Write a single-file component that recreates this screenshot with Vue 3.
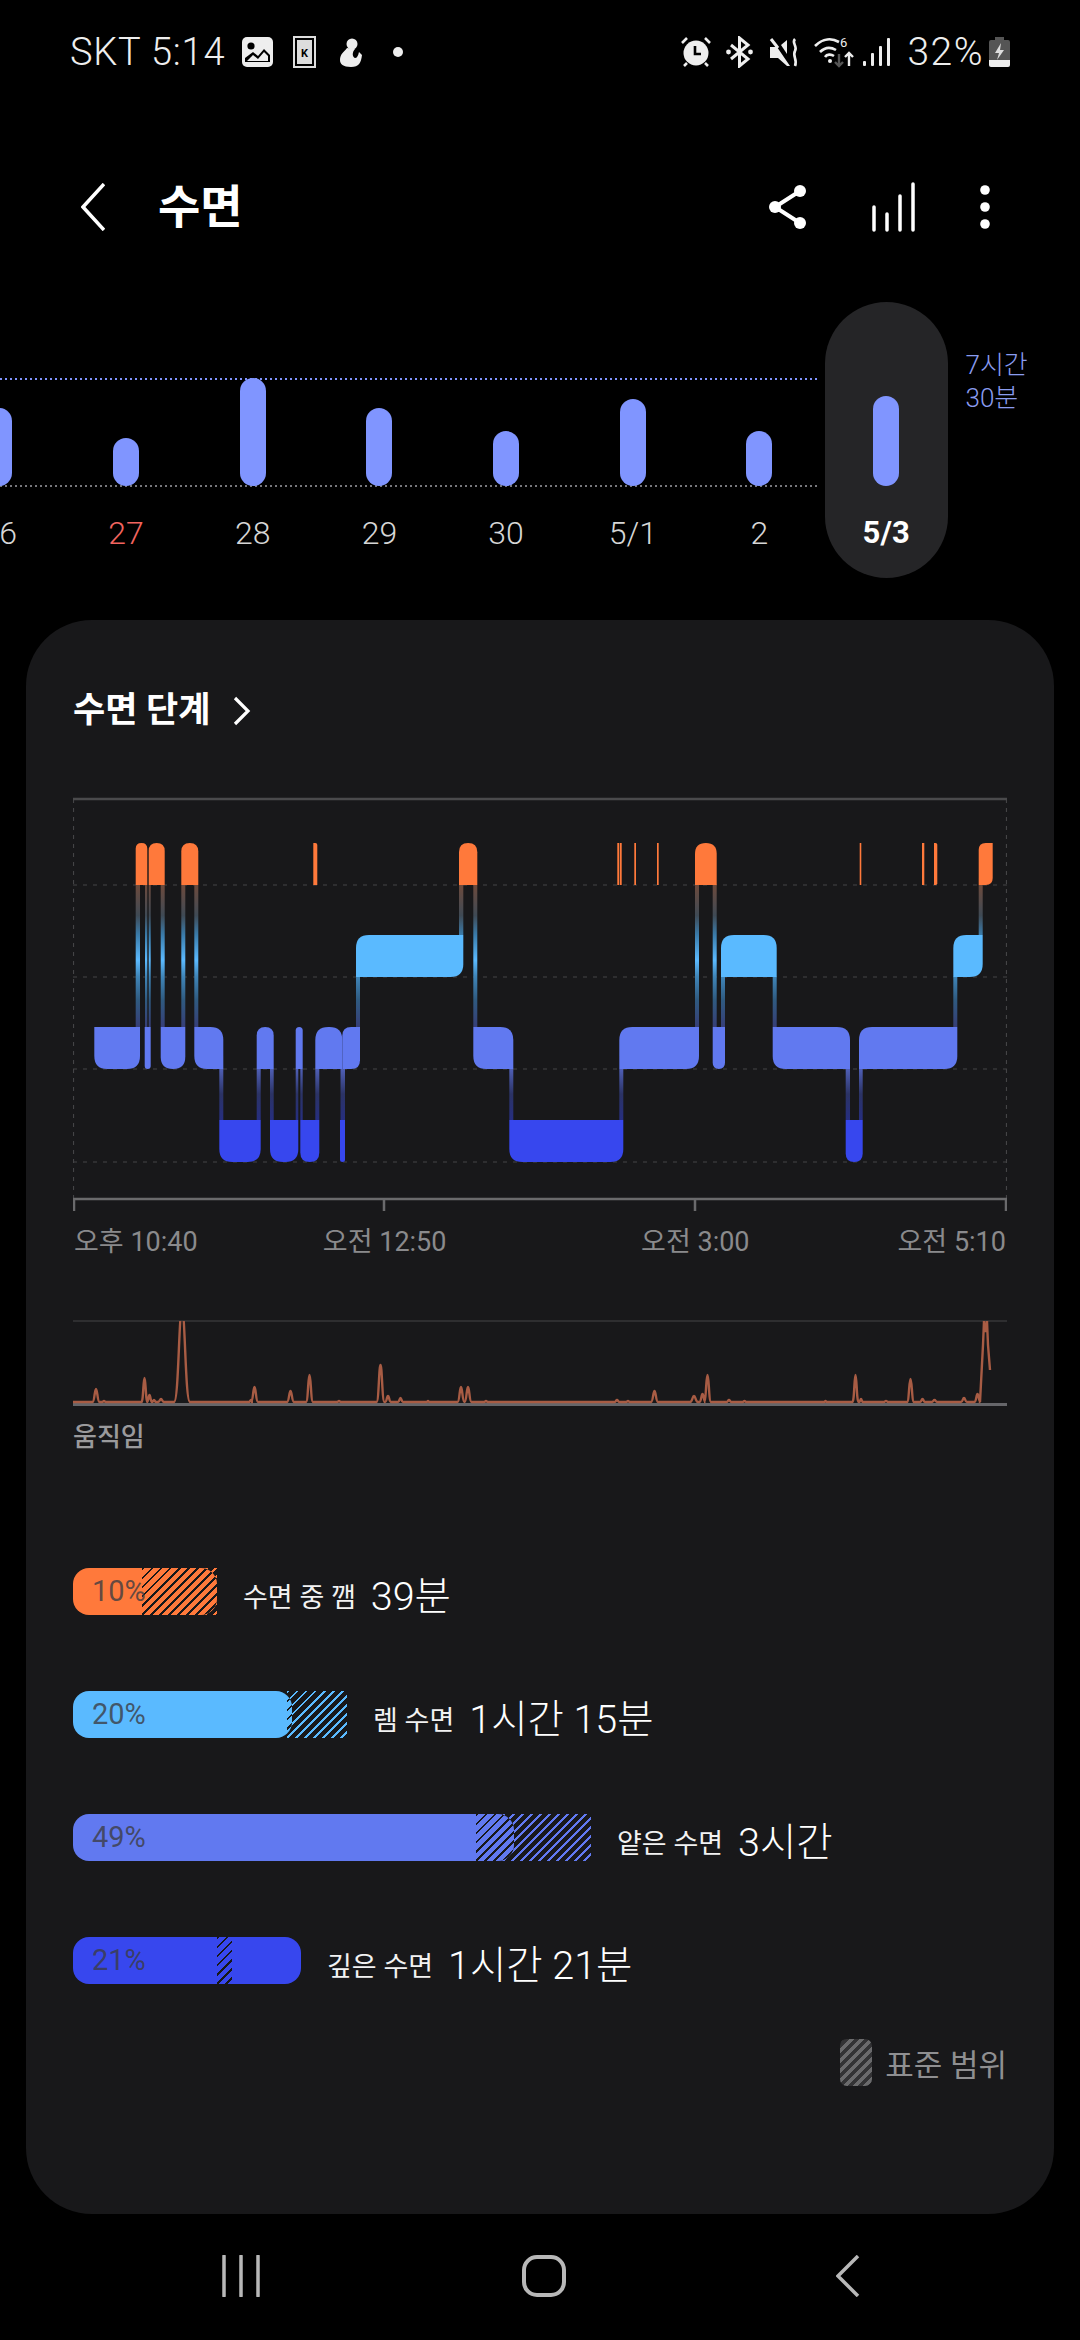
<template>
  <div class="screen">
    <div class="status">
      <div class="status-side">
        <span class="status-text carrier">SKT 5:14</span>
        <svg class="ic-image" width="31" height="30" viewBox="0 0 31 30">
          <rect width="31" height="30" rx="5" fill="#eee" />
          <circle cx="9" cy="9" r="3.6" fill="#000" />
          <path d="M3 25v-4l8-6 5 4 6-7 6 6v7z" fill="#000" />
          <path d="M5 24l6-6 5 4 6-7 4 4v5z" fill="#eee" />
        </svg>
        <svg class="ic-card" width="23" height="32" viewBox="0 0 23 32">
          <rect x="1" y="1" width="21" height="30" fill="#000" stroke="#ddd" stroke-width="2" />
          <rect x="4" y="4" width="15" height="24" fill="#ddd" />
          <text x="11.5" y="21" class="ic-card-k">K</text>
        </svg>
        <svg class="ic-figure" width="25" height="29" viewBox="0 0 25 29">
          <circle cx="14" cy="6" r="5.500" fill="#eee" />
          <path d="M9 10c-3 4-7 6-7 12 0 4 3 7 11 7s10-4 11-12l-3-3c-1 4-2 6-4 6-3-1-3-6 0-9z" fill="#eee" />
        </svg>
        <span class="status-dot"></span>
      </div>
      <div class="status-side">
        <svg class="ic-alarm" width="30" height="30" viewBox="0 0 30 30" fill="none">
          <circle cx="15" cy="16" r="12.500" fill="#eee" />
          <path d="M14 9v8h6" stroke="#000" stroke-width="2.600" />
          <path d="M1 6l5-5M29 6l-5-5M6 26l-3 3M24 26l3 3" stroke="#eee" stroke-width="2.600" />
        </svg>
        <svg class="ic-bt" width="27" height="32" viewBox="0 0 27 32" fill="none">
          <path d="M5 9l17 14-8.500 7V2L22 9 5 23" stroke="#eee" stroke-width="3" />
          <circle cx="2.500" cy="16" r="2.400" fill="#eee" />
          <circle cx="24.500" cy="16" r="2.400" fill="#eee" />
        </svg>
        <svg class="ic-mute" width="29" height="29" viewBox="0 0 29 29" fill="none">
          <path d="M1 9h7L21 28h-3l-9-8H1z" fill="#eee" />
          <path d="M2 1l7 9" stroke="#eee" stroke-width="3" />
          <path d="M12 7l6-5v14z" fill="#eee" />
          <path d="M26 1c-4 4 3 7 0 12-3 5 3 9 0 15" stroke="#eee" stroke-width="2.600" />
        </svg>
        <svg class="ic-wifi" width="40" height="32" viewBox="0 0 40 32" fill="none">
          <path d="M1 10c8-8 17-8 24-4M6 16c5-5 11-5 16-2M11 21c2-3 6-3 9-1" stroke="#eee" stroke-width="2.600" />
          <circle cx="16" cy="25" r="2" fill="#eee" />
          <text x="26" y="11" class="ic-wifi-six">6</text>
          <path d="M25 18v12M21 26l4 4 4-4" stroke="#555" stroke-width="2.400" />
          <path d="M35 30V17M31 21l4-4 4 4" stroke="#eee" stroke-width="2.400" />
        </svg>
        <svg class="ic-signal" width="28" height="29" viewBox="0 0 28 29" fill="#eee">
          <rect x="0" y="23" width="3" height="5" rx="1" />
          <rect x="8" y="15" width="3" height="13" rx="1" />
          <rect x="16" y="8" width="3" height="20" rx="1" />
          <rect x="24" y="0" width="3" height="28" rx="1" />
        </svg>
        <span class="status-text battery-text">32%</span>
        <svg class="ic-battery" width="21" height="30" viewBox="0 0 21 30">
          <path d="M6 0h9v3h4a2 2 0 0 1 2 2v19H0V5a2 2 0 0 1 2-2h4z" fill="#555" />
          <path d="M0 23h21v5a2 2 0 0 1-2 2H2a2 2 0 0 1-2-2z" fill="#eee" />
          <path d="M12 6l-6 10h4l-2 7 7-10h-4z" fill="#ddd" />
        </svg>
      </div>
    </div>

    <div class="appbar">
      <svg width="24" height="48" viewBox="0 0 24 48" fill="none">
        <path d="M23 1L2 24l21 23" stroke="#fff" stroke-width="3.500" />
      </svg>
      <h1 class="title">수면</h1>
      <div class="appbar-actions">
        <svg width="38" height="46" viewBox="0 0 38 46" fill="none">
          <path d="M31 7L6 23l25 16" stroke="#fff" stroke-width="4" />
          <circle cx="31" cy="7" r="6" fill="#fff" />
          <circle cx="6" cy="23" r="6" fill="#fff" />
          <circle cx="31" cy="39" r="6" fill="#fff" />
        </svg>
        <svg width="44" height="50" viewBox="0 0 44 50" fill="none">
          <path d="M3 48V25M16 48V32M29 48V14M42 48V2" stroke="#fff" stroke-width="3.500" stroke-linecap="round" />
        </svg>
        <svg width="12" height="46" viewBox="0 0 12 46" fill="#fff">
          <circle cx="6" cy="6" r="4.800" />
          <circle cx="6" cy="23" r="4.800" />
          <circle cx="6" cy="40" r="4.800" />
        </svg>
      </div>
    </div>

    <div class="week">
      <div class="dots dots-goal"></div>
      <div class="dots dots-base"></div>
      <div v-for="day in days" :key="day.label" class="day" :class="{ active: day.active }">
        <div class="bar-slot">
          <div class="bar" :style="{ height: day.height + 'px' }"></div>
        </div>
        <span class="day-label" :class="{ sunday: day.sunday }">{{ day.label }}</span>
      </div>
      <div class="goal-label">7시간<br />30분</div>
    </div>

    <div class="card">
      <div class="card-head">
        <span>수면 단계</span>
        <svg width="18" height="30" viewBox="0 0 18 30" fill="none">
          <path d="M2 2l13 13L2 28" stroke="#fff" stroke-width="3.200" />
        </svg>
      </div>

      <svg class="stages" width="934" height="420" viewBox="73 795 934 420" fill="none">
        <defs>
          <linearGradient id="link" gradientUnits="userSpaceOnUse" x1="0" y1="885" x2="0" y2="1120">
            <stop offset="0" stop-color="#6d4a3c" />
            <stop offset="0.13" stop-color="#3f4a55" />
            <stop offset="0.21" stop-color="#3a7aa8" />
            <stop offset="0.32" stop-color="#5bbaff" />
            <stop offset="0.39" stop-color="#3f85b8" />
            <stop offset="0.49" stop-color="#2f5a80" />
            <stop offset="0.6" stop-color="#363f78" />
            <stop offset="0.78" stop-color="#5060b8" />
            <stop offset="0.89" stop-color="#2b3365" />
            <stop offset="1" stop-color="#262e80" />
          </linearGradient>
        </defs>
        <path d="M73.500 799v400M1006.500 799v400" stroke="#444446" stroke-width="1.200" stroke-dasharray="4 5" />
        <path d="M73 885h934M73 977h934M73 1069h934M73 1162h934" stroke="#444446" stroke-width="1.200" stroke-dasharray="4 6" />
        <path d="M73 799h934" stroke="#4a4a4c" stroke-width="2.500" />
        <path d="M73 1199h934" stroke="#6a6a6c" stroke-width="2.500" />
        <path d="M74 1199v12M384 1199v12M695 1199v12M1006 1199v12" stroke="#6a6a6c" stroke-width="2.500" />
        <rect
          v-for="(link, i) in links"
          :key="'l' + i"
          :x="link.x"
          :y="link.y"
          :width="link.w"
          :height="link.h"
          fill="url(#link)"
        />
        <path v-for="(seg, i) in segments" :key="'s' + i" :d="seg.d" :fill="seg.fill" />
      </svg>

      <div class="ticks">
        <span>오후 10:40</span>
        <span>오전 12:50</span>
        <span>오전 3:00</span>
        <span>오전 5:10</span>
      </div>

      <svg class="movement" width="934" height="90" viewBox="73 1318 934 90" fill="none">
        <clipPath id="moveClip"><rect x="73" y="1321" width="934" height="90" /></clipPath>
        <path d="M73 1321h934" stroke="#2e2e30" stroke-width="2" />
        <path d="M73 1404.500h934" stroke="#66666a" stroke-width="3" />
        <path :d="movementPath" clip-path="url(#moveClip)" stroke="#a85c44" stroke-width="2.400" />
      </svg>
      <div class="movement-label">움직임</div>

      <div class="stats">
        <div v-for="stat in stats" :key="stat.name" class="stat">
          <div class="track" :style="{ width: Math.max(stat.fill, stat.end) + 'px', color: stat.color }">
            <div class="range" :style="{ left: stat.from + 'px', width: stat.end - stat.from + 'px' }"></div>
            <div class="fill" :style="{ width: stat.fill + 'px', background: stat.color }">
              <div class="range-in" :style="{ left: stat.from + 'px', width: stat.end - stat.from + 'px' }"></div>
              <span class="percent">{{ stat.percent }}</span>
            </div>
          </div>
          <span class="stat-name">{{ stat.name }}</span>
          <span class="stat-value">{{ stat.value }}</span>
        </div>
      </div>

      <div class="legend">
        <span class="legend-swatch"></span>
        <span>표준 범위</span>
      </div>
    </div>

    <div class="navbar">
      <svg width="40" height="42" viewBox="0 0 40 42" fill="none">
        <path d="M3 1v40M20 1v40M37 1v40" stroke="#b8b8b8" stroke-width="3.500" stroke-linecap="round" />
      </svg>
      <svg width="44" height="42" viewBox="0 0 44 42" fill="none">
        <rect x="2" y="2" width="40" height="38" rx="13" stroke="#b8b8b8" stroke-width="4" />
      </svg>
      <svg width="24" height="42" viewBox="0 0 24 42" fill="none">
        <path d="M22 1L2 21l20 20" stroke="#b8b8b8" stroke-width="3.500" />
      </svg>
    </div>
  </div>
</template>

<script setup>
const days = [
  { label: "26", height: 78 },
  { label: "27", height: 48, sunday: true },
  { label: "28", height: 108 },
  { label: "29", height: 78 },
  { label: "30", height: 55 },
  { label: "5/1", height: 87 },
  { label: "2", height: 55 },
  { label: "5/3", height: 90, active: true },
];

const colors = ["#ff793b", "#5abaff", "#6179f0", "#3747ee"];
const rowTop = [843, 935, 1027, 1120];
const rowBottom = [885, 977, 1069, 1162];

// x0, x1, row, rounded corners
const rawSegments = [
  [135.7, 147.3, 0, "tl tr"],
  [148.7, 164.7, 0, "tl tr"],
  [181.3, 198.3, 0, "tl tr"],
  [313.3, 317.3, 0, "tr"],
  [459, 477.3, 0, "tl tr"],
  [617.3, 619.3, 0, ""],
  [620, 621.7, 0, ""],
  [634.3, 636, 0, ""],
  [657, 658.7, 0, ""],
  [695, 716.7, 0, "tl tr"],
  [859.7, 861.3, 0, ""],
  [922, 924.3, 0, ""],
  [934, 937.3, 0, "tr br"],
  [978.7, 992.7, 0, "tl br"],
  [356, 463.3, 1, "tl br"],
  [721, 776.7, 1, "tl tr"],
  [953.3, 982.7, 1, "tl br"],
  [94.3, 140, 2, "bl br"],
  [144.7, 150.7, 2, "bl br"],
  [160.7, 185.3, 2, "bl br"],
  [194.3, 223.3, 2, "tr bl"],
  [256.7, 273.7, 2, "tl tr"],
  [295.7, 302.7, 2, "tl tr"],
  [315.3, 342.3, 2, "tl tr"],
  [342.3, 360, 2, "tl br"],
  [473.3, 513.3, 2, "tr bl"],
  [619.3, 699, 2, "tl br"],
  [712.7, 725, 2, "bl br"],
  [772.7, 850, 2, "tr bl"],
  [859, 957.3, 2, "tl br"],
  [219.3, 260.7, 3, "bl br"],
  [270, 298.3, 3, "bl br"],
  [300.3, 319.3, 3, "bl br"],
  [340, 345, 3, "bl br"],
  [509.3, 623.3, 3, "bl br"],
  [845.7, 862.7, 3, "bl br"],
];

const segPath = (x0, x1, row, corners) => {
  const t = rowTop[row];
  const b = rowBottom[row];
  const r = Math.min(13, (x1 - x0) / 2);
  const tl = corners.includes("tl") ? r : 0;
  const tr = corners.includes("tr") ? r : 0;
  const br = corners.includes("br") ? r : 0;
  const bl = corners.includes("bl") ? r : 0;
  return (
    `M${x0 + tl} ${t}H${x1 - tr}Q${x1} ${t} ${x1} ${t + tr}` +
    `V${b - br}Q${x1} ${b} ${x1 - br} ${b}` +
    `H${x0 + bl}Q${x0} ${b} ${x0} ${b - bl}` +
    `V${t + tl}Q${x0} ${t} ${x0 + tl} ${t}Z`
  );
};

const segments = rawSegments.map(([x0, x1, row, corners]) => ({
  d: segPath(x0, x1, row, corners),
  fill: colors[row],
}));

// x0, x1, upper row, lower row
const rawLinks = [
  [135.7, 140, 0, 2],
  [145, 147.3, 0, 2],
  [148.7, 150.7, 0, 2],
  [160.7, 164.7, 0, 2],
  [181.3, 185.3, 0, 2],
  [194.3, 198.3, 0, 2],
  [219.3, 223.3, 2, 3],
  [256.7, 260.7, 2, 3],
  [270, 273.7, 2, 3],
  [295.7, 298.3, 2, 3],
  [300.3, 302.7, 2, 3],
  [315.3, 319.3, 2, 3],
  [340.5, 345, 2, 3],
  [356, 360, 1, 2],
  [459, 463.3, 0, 1],
  [473.3, 477.3, 0, 2],
  [509.3, 513.3, 2, 3],
  [619.3, 623.3, 2, 3],
  [695, 699, 0, 2],
  [712.7, 716.7, 0, 2],
  [721, 725, 1, 2],
  [772.7, 776.7, 1, 2],
  [845.7, 850, 2, 3],
  [859, 862.7, 2, 3],
  [953.3, 957.3, 1, 2],
  [978.7, 982.7, 0, 1],
];

const links = rawLinks.map(([x0, x1, up, down]) => ({
  x: x0,
  w: x1 - x0,
  y: rowBottom[up],
  h: rowTop[down] - rowBottom[up],
}));

// spike x, top y, half width
const spikes = [
  [96, 1389, 3.5], [104, 1401, 2], [144.5, 1378, 3], [149.5, 1395, 2.5], [154, 1400, 2],
  [161, 1399, 3], [182, 1310, 8], [251, 1400, 2], [254.5, 1387, 3.5], [290.5, 1391, 3.5],
  [309.5, 1375, 3.5], [339, 1401, 2], [380.5, 1365, 4], [388, 1396, 3], [400.5, 1398, 2.5],
  [428, 1401, 1.5], [461, 1387, 3.5], [468, 1387, 3.5], [486, 1401, 2], [617, 1400, 2.5],
  [628, 1401, 2], [654.5, 1391, 3.5], [694, 1396, 4], [702.5, 1394, 3], [707.5, 1375, 3.5],
  [729, 1400, 2.5], [744.5, 1401, 2], [825.5, 1401, 1.5], [855.5, 1375, 3], [861, 1399, 2],
  [886, 1401, 2.5], [910.5, 1379, 3.5], [922.5, 1399, 2.5], [934.5, 1400, 3], [964, 1398, 3],
  [977.5, 1394, 3],
];

const buildMovement = () => {
  const base = 1402;
  let d = `M73 ${base}`;
  for (const [x, top, w] of spikes) {
    d += `L${x - w} ${base}C${x - w * 0.4} ${base} ${x - w * 0.4} ${top} ${x} ${top}`;
    d += `C${x + w * 0.4} ${top} ${x + w * 0.4} ${base} ${x + w} ${base}`;
  }
  d += `L980 ${base}L983 1345L984 1321L985.500 1332L987 1321L988 1345L990 1370`;
  return d;
};

const movementPath = buildMovement();

// widths are px from the track's left edge
const stats = [
  { name: "수면 중 깸", value: "39분", percent: "10%", color: colors[0], fill: 144, from: 69, end: 144 },
  { name: "렘 수면", value: "1시간 15분", percent: "20%", color: colors[1], fill: 219, from: 214, end: 274 },
  { name: "얕은 수면", value: "3시간", percent: "49%", color: colors[2], fill: 441, from: 403, end: 518 },
  { name: "깊은 수면", value: "1시간 21분", percent: "21%", color: colors[3], fill: 228, from: 144, end: 159 },
];
</script>

<style scoped>
.screen {
  width: 1080px;
  height: 2340px;
  background: #000;
  overflow: hidden;
  display: flex;
  flex-direction: column;
  font-family: Roboto, "Noto Sans CJK KR", sans-serif;
  color: #fff;
}

.status {
  height: 104px;
  display: flex;
  align-items: center;
  justify-content: space-between;
  padding: 0 70px 0 70px;
  flex: none;
}

.status-side {
  display: flex;
  align-items: center;
}

.status-text {
  font-size: 38px;
  font-weight: 300;
  color: #eee;
  white-space: nowrap;
}

.carrier {
  letter-spacing: 0.800px;
}

.ic-image {
  margin-left: 17px;
}

.ic-card {
  margin-left: 20px;
}

.ic-figure {
  margin-left: 22px;
}

.ic-card-k {
  font-family: Roboto, sans-serif;
  font-size: 11px;
  font-weight: 700;
  fill: #000;
  text-anchor: middle;
}

.ic-wifi-six {
  font-family: Roboto, sans-serif;
  font-size: 13px;
  fill: #eee;
}

.status-dot {
  width: 10px;
  height: 10px;
  border-radius: 50%;
  background: #eee;
  margin: 0 0 0 30px;
}

.ic-bt {
  margin-left: 15px;
}

.ic-mute {
  margin-left: 16px;
}

.ic-wifi {
  margin-left: 16px;
}

.ic-signal {
  margin-left: 9px;
}

.battery-text {
  margin-left: 16px;
  font-size: 39px;
  letter-spacing: 1.500px;
}

.ic-battery {
  margin-left: 5px;
}

.appbar {
  height: 198px;
  padding: 8px 89px 0 81px;
  display: flex;
  align-items: center;
  flex: none;
  box-sizing: border-box;
}

.title {
  margin: 0 0 0 53px;
  font-size: 46px;
  font-weight: 700;
  line-height: 56px;
}

.appbar-actions {
  margin-left: auto;
  display: flex;
  align-items: center;
  gap: 64px;
}

.week {
  position: relative;
  height: 276px;
  margin-left: -64px;
  display: flex;
  flex: none;
}

.dots {
  position: absolute;
  left: 64px;
  width: 820px;
  height: 2px;
  background-size: 5px 2px;
}

.dots-goal {
  top: 76px;
  background-image: linear-gradient(90deg, #8095ff 2px, transparent 2px);
}

.dots-base {
  top: 183px;
  background-image: linear-gradient(90deg, #77777c 2px, transparent 2px);
}

.day {
  position: relative;
  width: 126.700px;
  height: 276px;
  display: flex;
  flex-direction: column;
  align-items: center;
  flex: none;
}

.day.active {
  width: 123px;
  margin: 0 1.850px;
  background: #252527;
  border-radius: 62px;
}

.bar-slot {
  height: 184px;
  display: flex;
  align-items: flex-end;
}

.bar {
  width: 26px;
  border-radius: 13px;
  background: #8095ff;
}

.day-label {
  margin-top: 27px;
  font-size: 32px;
  line-height: 40px;
  font-weight: 300;
  color: #d6d6d6;
}

.day-label.sunday {
  color: #f2645f;
}

.day.active .day-label {
  color: #fff;
  font-weight: 700;
  font-size: 31px;
}

.goal-label {
  margin-left: 16px;
  padding-top: 47px;
  font-size: 26px;
  line-height: 33px;
  font-weight: 300;
  color: #8a9cf0;
  white-space: nowrap;
}

.card {
  margin: 42px 26px 0;
  height: 1594px;
  padding: 71px 47px 0;
  box-sizing: border-box;
  background: #18181a;
  border-radius: 66px;
  flex: none;
}

.card-head {
  height: 40px;
  display: flex;
  align-items: center;
  gap: 22px;
  font-size: 35px;
  font-weight: 700;
  line-height: 40px;
}

.stages {
  display: block;
  margin-top: 64px;
}

.ticks {
  margin-top: 7px;
  height: 40px;
  display: flex;
  justify-content: space-between;
  font-size: 27px;
  line-height: 40px;
  color: #8a8a8c;
  padding: 0 1px;
}

.ticks span {
  width: 0;
  display: flex;
  justify-content: center;
  white-space: nowrap;
}

.ticks span:first-child {
  justify-content: flex-start;
}

.ticks span:last-child {
  justify-content: flex-end;
}

.movement {
  display: block;
  margin-top: 56px;
}

.movement-label {
  margin-top: 12px;
  font-size: 26px;
  line-height: 34px;
  font-weight: 500;
  color: #9a9a9c;
}

.stats {
  margin-top: 114px;
  display: flex;
  flex-direction: column;
  gap: 76px;
}

.stat {
  height: 47px;
  display: flex;
  align-items: center;
}

.track {
  position: relative;
  height: 47px;
  flex: none;
}

.range {
  position: absolute;
  top: 0;
  bottom: 0;
  background: repeating-linear-gradient(135deg, currentColor 0 2px, transparent 2px 6.400px);
}

.fill {
  position: relative;
  height: 47px;
  border-radius: 16px;
  overflow: hidden;
}

.range-in {
  position: absolute;
  top: 0;
  bottom: 0;
  background: repeating-linear-gradient(135deg, #18181a 0 2px, transparent 2px 6.400px);
}

.percent {
  position: relative;
  padding-left: 19px;
  font-size: 29px;
  line-height: 47px;
  color: rgba(60, 60, 66, 0.8);
}

.stat-name {
  margin-left: 26px;
  font-size: 27px;
  color: #f2f2f2;
  white-space: nowrap;
  position: relative;
  top: 4px;
}

.stat-value {
  margin-left: 15px;
  font-size: 39.500px;
  font-weight: 300;
  color: #fff;
  white-space: nowrap;
  position: relative;
  top: 1px;
}

.legend {
  margin-top: 55px;
  display: flex;
  align-items: center;
  justify-content: flex-end;
  gap: 13px;
  font-size: 31px;
  color: #8f8f91;
}

.legend-swatch {
  width: 32px;
  height: 47px;
  border-radius: 7px;
  background: repeating-linear-gradient(135deg, #6a6a6c 0 3.500px, #333335 3.500px 7px);
}

.navbar {
  flex: 1;
  display: flex;
  align-items: center;
  gap: 0;
  padding: 0 0 2px 221px;
}

.navbar svg:nth-child(2) {
  margin: 0 270px 0 261px;
}
</style>

<style>
html,
body {
  background: #000;
}
</style>
